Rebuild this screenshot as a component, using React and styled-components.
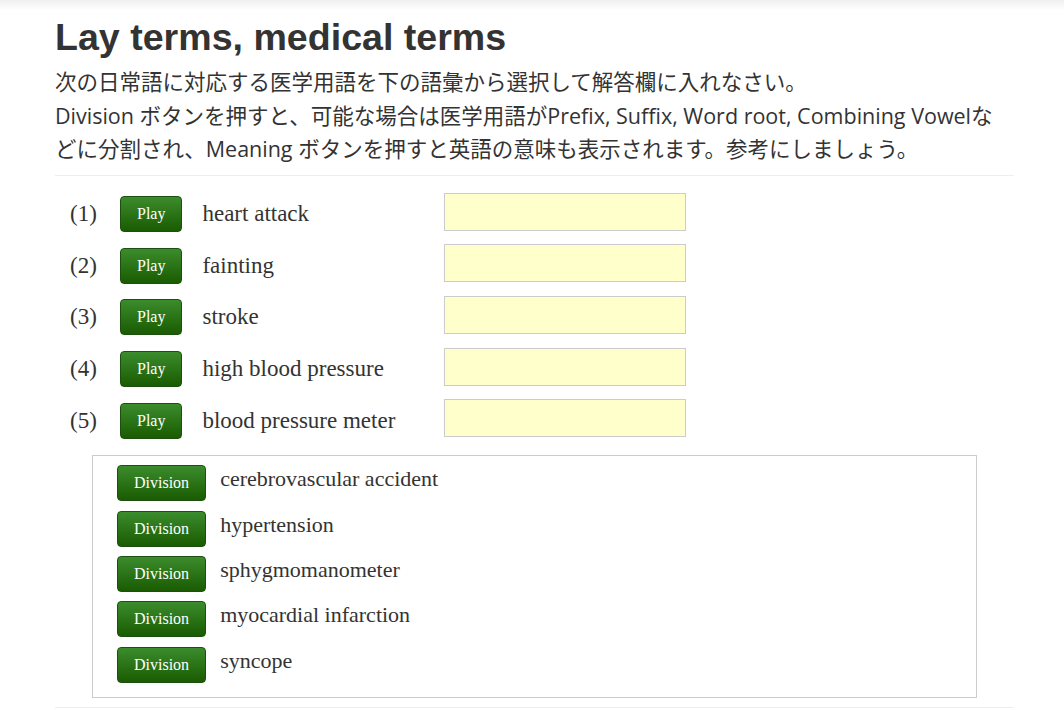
import React from "react";
import styled, { createGlobalStyle } from "styled-components";

const terms = ["heart attack", "fainting", "stroke", "high blood pressure", "blood pressure meter"];
const medical = [
  "cerebrovascular accident",
  "hypertension",
  "sphygmomanometer",
  "myocardial infarction",
  "syncope",
];

const GlobalStyle = createGlobalStyle`
  html, body {
    margin: 0;
    padding: 0;
    background: #fff;
  }
  body {
    background: linear-gradient(#efefef, #fff 10px) no-repeat;
    color: #333;
    font-family: "Liberation Serif", "Times New Roman", serif;
  }
`;

const Page = styled.div`
  width: 959px;
  padding: 0 0 0 55px;
`;

const Title = styled.h1`
  margin: 0;
  padding-top: 15px;
  font-family: "Liberation Sans", Arial, sans-serif;
  font-size: 37.6px;
  font-weight: bold;
  line-height: 44px;
  color: #333;
`;

const Lead = styled.p`
  margin: 6px 0 0;
  font-family: "Open Sans", "Noto Sans CJK JP", sans-serif;
  font-size: 21.5px;
  line-height: 33.5px;
  color: #333;
  white-space: nowrap;
`;

const Rule = styled.hr`
  margin: 0;
  border: 0;
  border-top: 1px solid #eee;
  margin-top: ${(p) => p.$top || 0}px;
`;

const Rows = styled.div`
  padding-top: 13px;
`;

const Row = styled.div`
  display: flex;
  align-items: center;
  height: 51.6px;
`;

const Num = styled.span`
  width: 50px;
  padding-left: 15px;
  font-size: 23px;
  color: #333;
`;

const GreenButton = styled.button`
  height: 36px;
  padding: 0 16px;
  font-family: "Liberation Serif", "Times New Roman", serif;
  font-size: 16px;
  color: #fff;
  background: linear-gradient(#3b8c2c, #1a5b02);
  border: 1px solid #1d4f10;
  border-radius: 4px;
  cursor: pointer;
`;

const Term = styled.span`
  width: 242px;
  margin-left: 20px;
  font-size: 23px;
  color: #333;
`;

const Answer = styled.input`
  box-sizing: border-box;
  width: 242px;
  height: 38px;
  margin-bottom: 5px;
  background: #ffffcc;
  border: 1px solid #ccc;
  outline: none;
`;

const WordBox = styled.div`
  margin: 9px 37px 0;
  padding: 9px 24px 14px;
  border: 1px solid #ccc;
  display: flex;
  flex-direction: column;
  gap: 9.3px;
`;

const WordRow = styled.div`
  display: flex;
  align-items: flex-start;
  height: 36px;
`;

const Word = styled.span`
  margin-left: 14px;
  font-size: 22px;
  line-height: 28px;
  color: #333;
`;

export default function App() {
  return (
    <>
      <GlobalStyle />
      <Page>
        <Title>Lay terms, medical terms</Title>
        <Lead>
          次の日常語に対応する医学用語を下の語彙から選択して解答欄に入れなさい。
          <br />
          Division ボタンを押すと、可能な場合は医学用語がPrefix, Suffix, Word root, Combining Vowelな
          <br />
          どに分割され、Meaning ボタンを押すと英語の意味も表示されます。参考にしましょう。
        </Lead>
        <Rule $top={9} />
        <Rows>
          {terms.map((t, i) => (
            <Row key={t}>
              <Num>({i + 1})</Num>
              <GreenButton>Play</GreenButton>
              <Term>{t}</Term>
              <Answer type="text" />
            </Row>
          ))}
        </Rows>
        <WordBox>
          {medical.map((m) => (
            <WordRow key={m}>
              <GreenButton>Division</GreenButton>
              <Word>{m}</Word>
            </WordRow>
          ))}
        </WordBox>
        <Rule $top={9} />
      </Page>
    </>
  );
}
